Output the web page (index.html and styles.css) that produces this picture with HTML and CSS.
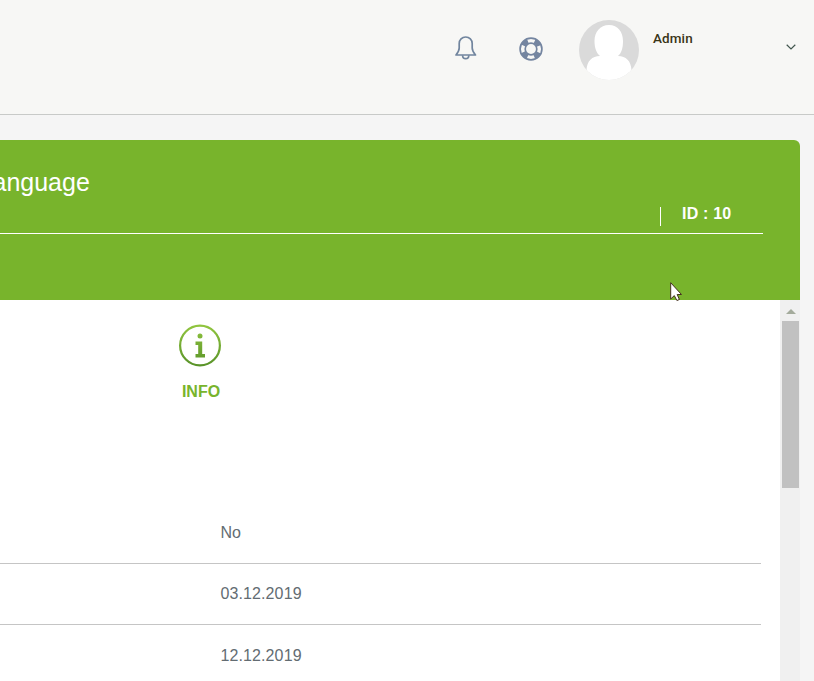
FILE: index.html
```html
<!DOCTYPE html>
<html lang="en">
<head>
<meta charset="utf-8">
<title>Language</title>
<link rel="stylesheet" href="styles.css">
</head>
<body>
<header class="topbar">
  <svg class="bell" width="22" height="24" viewBox="0 0 22 24" fill="none" stroke="#71859e" stroke-width="1.7" stroke-linejoin="round"><path d="M4.2 12V7.6C4.2 3.7 7 1 10.7 1s6.500 2.700 6.500 6.600V12c0 2.700 1 4.300 3.300 7H1c2.200-2.700 3.200-4.300 3.200-7Z"/><path d="M7.600 19.200c0 2.200 1.200 3.500 3.100 3.500s3.100-1.300 3.100-3.500"/></svg>
  <svg class="ring" width="24" height="24" viewBox="0 0 24 24" fill="none" stroke="#7485a0"><circle cx="12" cy="12" r="8.500" stroke-width="5" stroke-dasharray="6.400 6.952" stroke-dashoffset="-3.476"/><circle cx="12" cy="12" r="10.900" stroke-width="1.700"/><circle cx="12" cy="12" r="5.800" stroke-width="1.700"/></svg>
  <svg class="avatar" width="60" height="60" viewBox="0 0 60 60"><defs><clipPath id="disc"><circle cx="30" cy="30" r="30"/></clipPath></defs><g clip-path="url(#disc)"><path fill="#dadada" d="M0 0h60v60H0z"/><path fill="#fff" d="M30 5C21 5 15.500 12 15.500 21c0 7 2 12 5.500 15-8 0-13 5-13.500 14V60h45V50C52 41 47 36 39 36c3.500-3 5-8 5-15C44 12 39 5 30 5Z"/></g></svg>
  <span class="user">Admin</span>
  <svg class="chevron" width="10" height="6" viewBox="0 0 10 6" fill="none" stroke="#42564e" stroke-width="1.200"><path d="M.7.700 5 4.900 9.300.7"/></svg>
</header>
<main class="panel">
  <section class="hero">
    <div class="hero-top">
      <h1>anguage</h1>
      <div class="record">ID : 10</div>
    </div>
    <svg class="cursor" width="13" height="20" viewBox="0 0 13 20"><path d="M.7.700v16.300l3.600-3.400L6.900 18.500l2.500-1-2.200-5H11.500Z" fill="#fff" stroke="#45301f"/></svg>
  </section>
  <div class="body">
    <div class="content">
      <div class="info">
        <svg width="44" height="44" viewBox="0 0 44 44"><defs><linearGradient id="leaf" gradientUnits="userSpaceOnUse" x1="0" y1="0" x2="0" y2="44"><stop stop-color="#94c840"/><stop offset="1" stop-color="#579128"/></linearGradient></defs><circle cx="22" cy="22.500" r="19.900" fill="none" stroke="url(#leaf)" stroke-width="2.200"/><circle cx="22" cy="13" r="2.500" fill="url(#leaf)"/><path fill="url(#leaf)" d="M17.500 18.500h6.700v12.500H27v3.500h-9.500V31h2.700v-9h-2.700z"/></svg>
        <span>INFO</span>
      </div>
      <div class="rows">
        <div class="row">No</div>
        <div class="row">03.12.2019</div>
        <div class="row">12.12.2019</div>
      </div>
    </div>
    <div class="scrollbar"><i class="arrow"></i><i class="thumb"></i></div>
  </div>
</main>
</body>
</html>
```
FILE: styles.css
```css
* { box-sizing: border-box; }
body {
  margin: 0;
  height: 681px;
  overflow: hidden;
  background: #f5f5f5;
  font: 16px/20px "Liberation Sans", Arial, sans-serif;
  color: #636c72;
}
svg { display: block; flex: none; }
.topbar {
  display: flex;
  align-items: flex-start;
  height: 115px;
  padding: 20px 18px 0 455px;
  background: #f7f7f5;
  border-bottom: 1px solid #c8cac8;
}
.bell { margin-top: 16px; }
.ring { margin: 17px 36px 0 42px; }
.user {
  margin: 8px 0 0 14px;
  font: 500 13.5px/20px Roboto, sans-serif;
  letter-spacing: .1px;
  color: #3a3518;
}
.chevron { margin: 24px 0 0 auto; }
.panel { width: 800px; margin-top: 25px; }
.hero {
  position: relative;
  height: 160px;
  background: #78b42c;
  border-radius: 0 6px 0 0;
  color: #fff;
}
.hero-top {
  display: flex;
  justify-content: space-between;
  width: 763px;
  height: 94px;
  border-bottom: 1px solid #fff;
}
h1 {
  margin: 27px 0 0 -7.5px;
  font-size: 25px;
  font-weight: 400;
  line-height: 30px;
}
.record {
  width: 103px;
  height: 19px;
  margin-top: 67px;
  padding-left: 21px;
  border-left: 1px solid #fff;
  font-weight: 700;
  line-height: 14px;
  letter-spacing: .2px;
}
.cursor { position: absolute; left: 670px; top: 142px; }
.body { display: flex; height: 381px; overflow: hidden; background: #fff; }
.content { width: 780px; }
.info {
  display: flex;
  flex-direction: column;
  align-items: center;
  width: 402px;
  height: 202px;
  padding-top: 23px;
  color: #78b42c;
  font-weight: 700;
}
.info svg { margin-right: 2px; }
.info span { margin-top: 15px; }
.rows { width: 761px; }
.row {
  height: 61px;
  padding: 20px 0 0 220.4px;
  border-bottom: 1px solid #c5c5c5;
  letter-spacing: .12px;
}
.row:first-child { height: 62px; padding-top: 21px; }
.row:last-child { padding-top: 21px; }
.scrollbar {
  display: flex;
  flex-direction: column;
  align-items: center;
  width: 20px;
  padding-left: 1px;
  background: #f0f0f0;
}
.arrow {
  margin-top: 9px;
  border: 5px solid transparent;
  border-top: 0;
  border-bottom-color: #a4ab9c;
}
.thumb { width: 17px; height: 167px; margin-top: 7px; background: #c1c1c1; }
```
